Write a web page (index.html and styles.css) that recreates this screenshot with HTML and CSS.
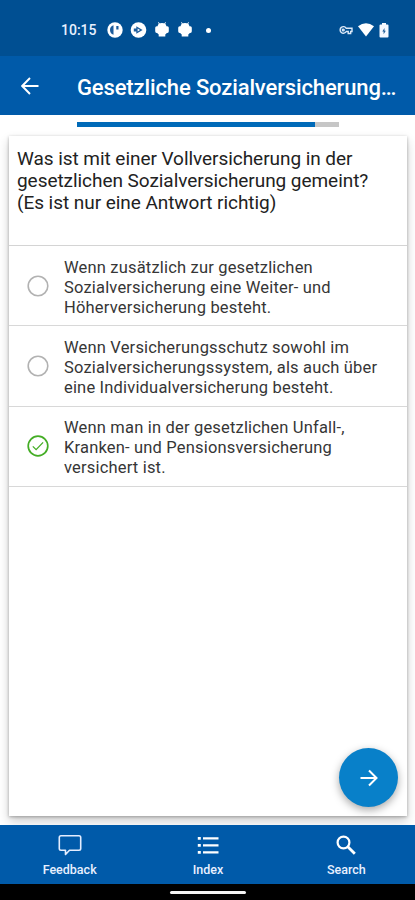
FILE: index.html
```html
<!DOCTYPE html>
<html lang="de">
<head>
<meta charset="utf-8">
<meta name="viewport" content="width=device-width, initial-scale=1">
<title>Quiz</title>
<link rel="stylesheet" href="styles.css">
</head>
<body>
<div class="app">
  <div class="status">
    <span class="time">10:15</span>
    <div class="notifications">
      <svg width="16" height="16" viewBox="0 0 16 16"><circle cx="8" cy="8" r="7.7" fill="#fff"/><path d="M6.500 3.300v9.500Q3 11.500 3 8t3.500-4.700zM9.300 4h2.200v3.400H9.300z" fill="#1c5c9c"/></svg>
      <svg width="17" height="16" viewBox="0 0 17 16"><circle cx="8.500" cy="8" r="7.800" fill="#fff"/><path d="M6.300 4.200L12.600 8l-6.300 3.800V9.500H3.800v-3h2.500z" fill="#1c5c9c"/><path d="M7.600 6.500v3L10 8z" fill="#fff"/></svg>
      <svg class="droid" width="14" height="16" viewBox="0 0 14 16"><path d="M2.600 4.200Q3 1 7 1t4.400 3.200h.9q1.500 0 1.500 1.600v3.400q0 1.800-1.500 1.800h-.8q0 1.300-1.200 1.300v2.200H3.700v-2.200q-1.200 0-1.200-1.300h-.8Q.2 11 .2 9.200V5.800q0-1.600 1.500-1.600z" fill="#fff"/><path d="M3.500.3l1 1.900M10.500.3l-1 1.900" stroke="#fff"/></svg>
      <svg class="droid" width="14" height="16" viewBox="0 0 14 16"><path d="M2.600 4.200Q3 1 7 1t4.400 3.200h.9q1.500 0 1.500 1.600v3.400q0 1.800-1.500 1.800h-.8q0 1.300-1.200 1.300v2.200H3.700v-2.200q-1.200 0-1.200-1.300h-.8Q.2 11 .2 9.200V5.800q0-1.600 1.500-1.600z" fill="#fff"/><path d="M3.500.3l1 1.900M10.500.3l-1 1.900" stroke="#fff"/></svg>
      <i class="more"></i>
    </div>
    <div class="system">
      <svg width="14" height="10" viewBox="0 0 14 10" fill="none" stroke="#dce9f8" stroke-width="1.400"><path d="M7.300 3.300H13v3.200h-1.300v2H9.200v-2H7.300A3.300 3.300 0 1 1 7.300 3.300z"/><circle cx="4.300" cy="5" r=".9"/></svg>
      <svg width="16" height="14" viewBox="0 0 16 14"><path d="M0 3.200Q8-2.800 16 3.200L8 13.500z" fill="#fff"/></svg>
      <svg width="10" height="15" viewBox="0 0 10 15"><path d="M3 0h4v1.500h1.500Q9.500 1.500 9.500 2.500v11q0 1-1 1h-7q-1 0-1-1v-11q0-1 1-1H3z" fill="#f4f8ff"/><path d="M5.500 5L3.300 8.500h1.300v2.700l2.200-3.500H5.500z" fill="#25619a"/></svg>
    </div>
  </div>
  <header class="bar">
    <svg class="back" width="18" height="18" viewBox="0 0 18 18" fill="none" stroke="#fff" stroke-width="1.900"><path d="M17.500 9H1.500M9 1L1.200 9 9 17"/></svg>
    <h1>Gesetzliche Sozialversicherung…</h1>
  </header>
  <main>
    <div class="progress"><div class="fill"></div></div>
    <section class="card">
      <p class="question"><span>Was ist mit einer Vollversicherung in der</span><span>gesetzlichen Sozialversicherung gemeint?</span><span>(Es ist nur eine Antwort richtig)</span></p>
      <div class="option">
        <svg width="22" height="22" viewBox="0 0 22 22"><circle cx="11" cy="11" r="9.800" fill="none" stroke="#b2b2b2" stroke-width="1.600"/></svg>
        <p><span>Wenn zusätzlich zur gesetzlichen</span><span>Sozialversicherung eine Weiter- und</span><span>Höherversicherung besteht.</span></p>
      </div>
      <div class="option">
        <svg width="22" height="22" viewBox="0 0 22 22"><circle cx="11" cy="11" r="9.800" fill="none" stroke="#b2b2b2" stroke-width="1.600"/></svg>
        <p><span>Wenn Versicherungsschutz sowohl im</span><span>Sozialversicherungssystem, als auch über</span><span>eine Individualversicherung besteht.</span></p>
      </div>
      <div class="option">
        <svg width="22" height="22" viewBox="0 0 22 22" fill="none" stroke="#44ad25"><circle cx="11" cy="11" r="9.800" stroke-width="1.700"/><path d="M5.800 11.400l3.300 3.200 7-7.200" stroke-width="1.300"/></svg>
        <p><span>Wenn man in der gesetzlichen Unfall-,</span><span>Kranken- und Pensionsversicherung</span><span>versichert ist.</span></p>
      </div>
      <button class="next" aria-label="Weiter"><svg width="18" height="18" viewBox="0 0 18 18" fill="none" stroke="#fff" stroke-width="2"><path d="M.5 9H16M9 1.500L16.500 9 9 16.500"/></svg></button>
    </section>
  </main>
  <nav>
    <a><svg width="24" height="22" viewBox="0 0 24 22" fill="none" stroke="#e4edff" stroke-width="1.600"><path d="M3 1.800h18q1.700 0 1.700 1.700v11q0 1.700-1.700 1.700H11.500L7.500 20.500v-4.300H3q-1.700 0-1.700-1.700v-11Q1.300 1.800 3 1.800z" stroke-linejoin="round"/></svg><span>Feedback</span></a>
    <a><svg width="22" height="22" viewBox="0 0 22 22" fill="#fff"><path d="M.8 3h3v2.700h-3zM.8 10h3v2.700h-3zM.8 17h3v2.700h-3zM6 3.200h15.500v2.200H6zM6 10.200h15.500v2.200H6zM6 17.200h15.500v2.200H6z"/></svg><span>Index</span></a>
    <a><svg width="22" height="22" viewBox="0 0 22 22" fill="none" stroke="#fff"><circle cx="8.500" cy="8.500" r="5.900" stroke-width="2.200"/><path d="M12.800 12.800l7 7" stroke-width="2.800"/></svg><span>Search</span></a>
  </nav>
  <div class="system-nav"><i></i></div>
</div>
</body>
</html>
```
FILE: styles.css
```css
* { box-sizing: border-box; margin: 0; }
body { font-family: Roboto, "Liberation Sans", sans-serif; background: #fff; }
svg { display: block; flex: none; }
.app { width: 415px; height: 900px; display: flex; flex-direction: column; overflow: hidden; }
.status { height: 56px; background: #004f92; color: #e8f1ff; display: flex; align-items: center; padding: 4px 26px 0 61px; }
.time { width: 46px; font-size: 14px; font-weight: 500; letter-spacing: 0; }
.notifications { display: flex; align-items: center; gap: 8px; }
.notifications svg:nth-child(2) { margin-left: -1px; }
.droid + .droid { margin-left: 1px; }
.more { width: 5px; height: 5px; border-radius: 50%; background: #fff; margin-left: 6px; }
.system { display: flex; align-items: center; gap: 5px; margin-left: auto; }
.bar { height: 59px; background: #005aa9; color: #fff; display: flex; align-items: center; padding: 3px 0 0 21px; }
.back { margin-top: -2px; }
.bar h1 { margin-left: 38px; font-size: 22px; font-weight: 500; white-space: nowrap; letter-spacing: -.13px; }
main { height: 710px; padding: 7px 8px 0 9px; background: #fff; }
.progress { width: 262px; height: 5px; margin-left: 68px; background: #c6c6c6; }
.fill { width: 238px; height: 100%; background: #006ab8; }
.card { height: 680px; margin-top: 9px; background: #fff; box-shadow: 0 1px 3px rgba(0,0,0,.28), 0 5px 10px rgba(0,0,0,.2); position: relative; }
.question { height: 110px; padding: 11.500px 8px 0; border-bottom: 1px solid #d4d4d4; font-size: 19px; letter-spacing: -.05px; line-height: 22.300px; color: #222; }
p span { display: block; white-space: nowrap; width: max-content; }
.option { height: 80.300px; border-bottom: 1px solid #d8d8d8; display: flex; align-items: center; padding-left: 18px; gap: 15px; font-size: 16.500px; letter-spacing: .18px; line-height: 20.100px; color: #363636; }
.option p { padding-top: 4px; }
.next { position: absolute; right: 9px; bottom: 9px; width: 59px; height: 59px; border: 0; border-radius: 50%; background: #0880c9; display: flex; align-items: center; justify-content: center; box-shadow: 0 3px 8px rgba(0,0,0,.35); }
nav { position: relative; height: 59px; background: #005aa9; color: #e8f0ff; display: grid; grid-template-columns: 1fr 1fr 1fr; }
nav a { display: flex; flex-direction: column; align-items: center; padding: 9px 0 0 1px; font-size: 12.500px; font-weight: 500; }
nav span { margin-top: 6px; line-height: 15px; }
.system-nav { height: 16px; background: #000; display: flex; justify-content: center; padding-top: 7px; }
.system-nav i { width: 76px; height: 3px; border-radius: 2px; background: #f4f4f4; }
```
